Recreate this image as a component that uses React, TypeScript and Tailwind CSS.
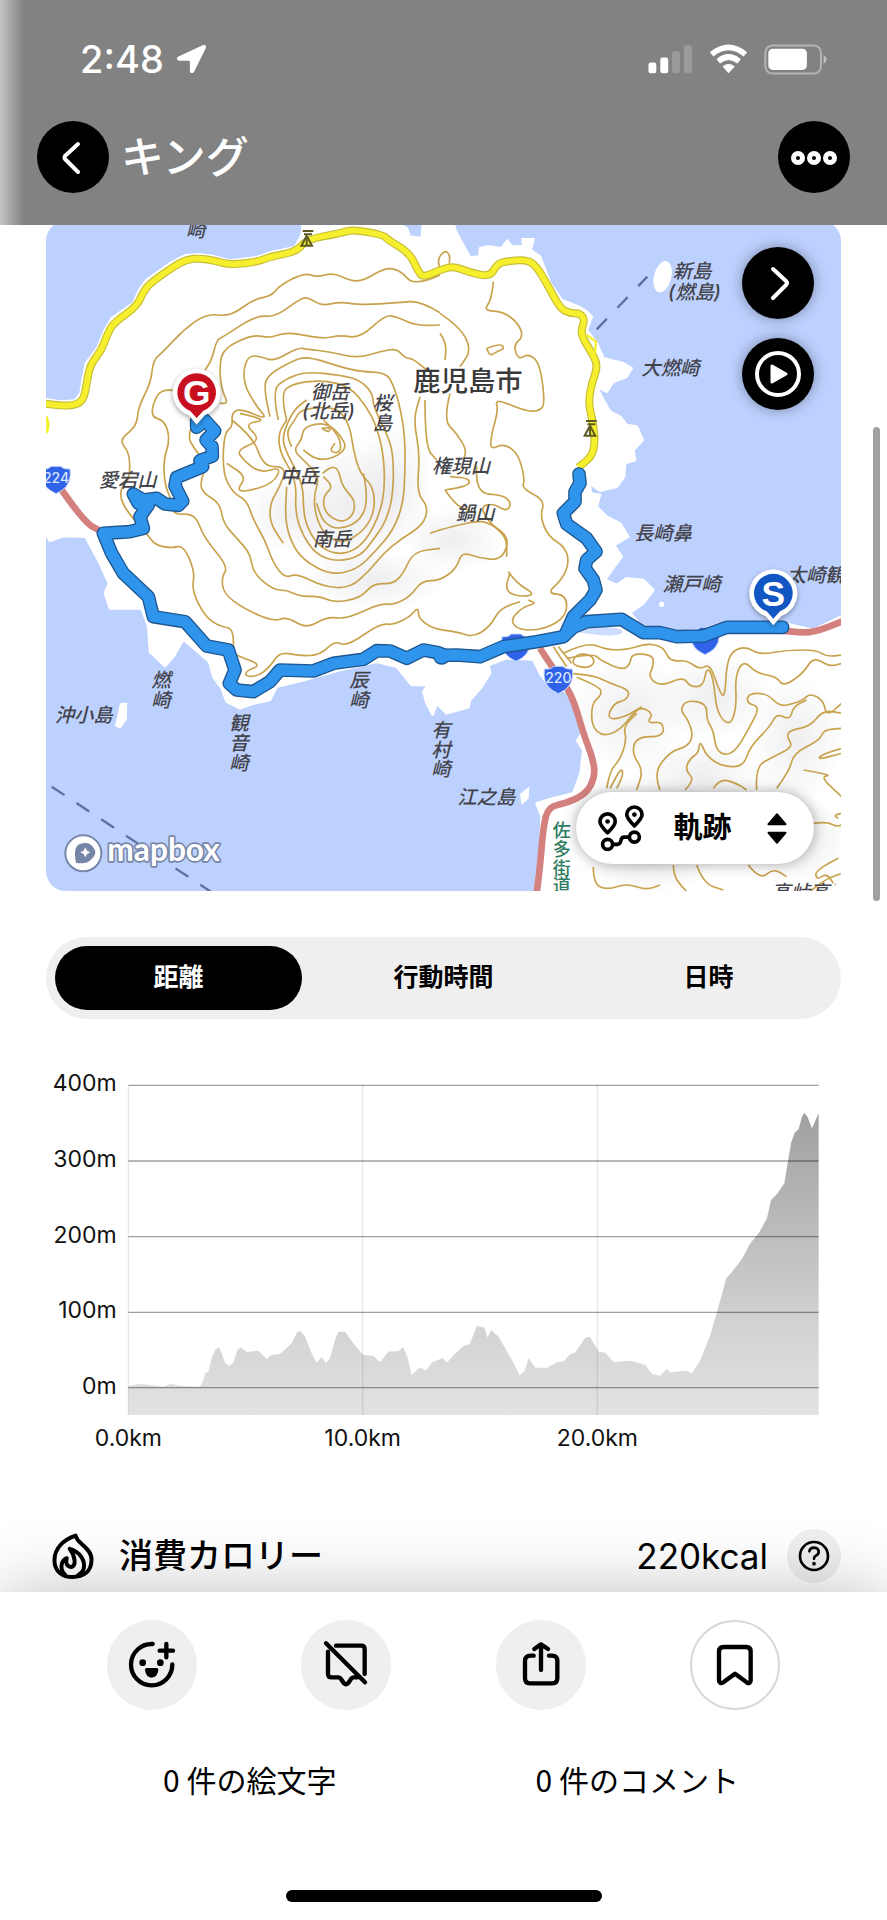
import { useState } from "react";
import type { ReactNode } from "react";
import { clsx } from "clsx";

const TABS = ["距離", "行動時間", "日時"];

const COAST =
  "18,538 60,545 105,542 122,520 128,480 138,430 172,385 195,330 215,295 280,250 298,210 318,182 390,130 435,106 480,103 525,110 570,122 650,112 690,98 765,82 785,45 790,3 1060,3 1100,25 1110,50 1145,55 1150,3 1240,3 1245,30 1262,62 1290,112 1318,110 1320,85 1345,80 1385,85 1402,62 1415,80 1450,78 1448,58 1480,58 1472,90 1500,110 1515,150 1530,190 1565,240 1620,262 1640,275 1655,290 1640,330 1670,370 1690,415 1750,430 1775,445 1760,470 1720,485 1700,515 1670,500 1690,540 1710,575 1740,590 1760,615 1790,620 1808,660 1780,690 1785,720 1755,730 1752,770 1730,800 1680,812 1650,790 1652,820 1680,825 1670,860 1700,890 1740,910 1765,950 1722,975 1745,1010 1715,1050 1695,1080 1730,1095 1760,1075 1810,1080 1840,1110 1810,1150 1770,1178 1800,1215 1850,1230 1930,1235 1990,1228 2050,1208 2240,1212 2320,1230 2403,1190 2403,2013 1485,2013 1500,1900 1505,1790 1490,1750 1530,1738 1600,1720 1622,1660 1630,1590 1612,1562 1625,1540 1600,1440 1580,1415 1530,1400 1500,1360 1480,1318 1400,1315 1345,1335 1350,1360 1325,1400 1290,1440 1285,1462 1220,1480 1190,1450 1178,1484 1160,1450 1150,1415 1165,1395 1115,1395 1070,1340 1010,1325 900,1350 800,1378 710,1400 690,1440 635,1452 600,1465 560,1445 545,1405 520,1370 508,1325 430,1258 400,1310 375,1338 330,1295 325,1220 305,1165 210,1165 195,1120 207,1090 180,1030 145,965 138,950 70,948 30,962 18,945";

const YELLOW_ROAD =
  "8,550 60,558 110,555 132,535 140,490 150,435 185,390 205,335 225,305 290,260 310,215 330,190 400,140 440,118 480,115 525,122 570,135 655,125 690,110 770,95 800,58 900,40 940,28 1030,45 1045,60 1110,100 1135,155 1150,172 1200,150 1240,138 1290,158 1350,170 1370,135 1390,125 1460,118 1490,140 1520,190 1560,265 1590,280 1620,280 1635,300 1620,340 1650,390 1675,435 1655,490 1645,550 1660,610 1665,670 1655,710 1615,742";

const RED_ROADS = [
  "55,795 130,905 185,935",
  "1500,1285 1535,1340 1595,1420 1630,1540 1660,1620 1665,1670 1640,1720 1580,1750 1525,1760 1510,1820 1500,1940 1490,2020",
  "2220,1232 2260,1236 2320,1238 2410,1203",
];

const ROUTE = [
  "470,600 470,622 494,600 524,633 498,660 516,680 517,708 480,722 488,740 410,772 405,798 428,843 415,856 375,852 350,835 310,840 280,822 295,850 325,855 300,890 310,925 270,935 190,940 215,1000 250,1060 325,1130 340,1190 435,1205 500,1278 565,1290 585,1350 568,1390 590,1410 640,1415 690,1385 720,1350 820,1353 880,1330 970,1318 1010,1292 1050,1293 1100,1315 1150,1290 1195,1298 1210,1306 1250,1305 1320,1310 1390,1280 1490,1265 1570,1250 1600,1222 1640,1205 1745,1198 1810,1238 1860,1238 1910,1250 1990,1248 2060,1222 2228,1222",
  "1575,1245 1600,1190 1650,1140 1668,1110 1660,1080 1635,1045 1640,1020 1668,995 1640,955 1580,912 1570,880 1605,845 1605,815 1620,790 1617,762",
];

const ISLAND_CONTOURS = [
  "1200,165 1125,200 1080,150 1035,143 970,183 930,182 880,158 830,172 795,158 720,195 695,228 640,238 570,290 500,280 430,330 365,400 340,420 332,490 295,560 290,620 236,660 270,700 268,780 250,790 238,830 265,880 320,940 345,975 395,985 430,975 465,1055 455,1110 495,1190 540,1220 580,1225 580,1300 600,1310 665,1335 615,1355 620,1370 655,1368 690,1340 720,1295 780,1308 840,1305 885,1262 920,1280 1020,1210 1060,1215 1110,1190 1135,1160 1135,1195 1180,1227 1250,1235 1300,1252 1350,1220 1380,1165 1440,1145",
  "1200,278 1140,242 1080,248 960,255 900,245 845,258 810,235 785,232 705,292 650,285 550,350 530,360 515,420 495,450",
  "420,515 385,507 350,520 330,590 375,602 390,660 370,720 375,800 400,850 400,885 465,880 490,950 565,1040 545,1070 550,1120 610,1165 700,1205 740,1190 800,1227 860,1190 920,1197 1020,1150 1060,1155 1110,1130 1145,1082 1200,1082 1250,1045 1265,995 1320,1015 1380,1020 1405,975 1395,940 1340,905 1300,905 1215,925 1170,940",
  "1200,315 1135,320 1070,290 1035,285 960,355 900,345 850,357 740,335 690,355 640,343 550,385 538,440 545,510 565,550 540,550",
  "465,600 440,645 465,690 500,730 480,790 490,820 540,850 550,910 595,960 630,1000 640,1060 700,1110 740,1110 780,1130 840,1128 880,1148 960,1135 1000,1090 1060,1092 1090,1060 1120,995 1200,985",
  "1160,450 1120,415 1095,415 1070,385 1020,395 950,415 870,395 800,388 775,382 700,425 660,408 625,408 610,450 615,500 650,560 685,600 600,565 575,580 578,620 552,640 548,760 580,820 620,840 640,900 675,960 700,1030 735,1075 770,1060 850,1100 930,1105 990,1050 1030,1000 1085,955 1150,915 1165,860 1130,820 1140,700 1120,600 1140,530",
  "690,590 668,500 690,460 755,425 800,408 900,440 960,455 1040,458 1062,500 1080,560 1095,650 1095,760 1090,850 1060,930 1010,990 950,1050 870,1065 790,1020 755,970 735,900 740,800",
  "715,600 695,510 740,475 800,455 900,465 960,480 998,520 1000,560 1040,640 1060,700 1060,820 1040,900 1000,960 960,1010 890,1025 830,1005 790,950 765,880 770,780 720,700 715,640 740,600",
  "740,600 720,520 760,490 850,480 930,500 980,560 1010,620 1030,700 1035,800 1020,880 980,960 930,1000 870,1000 820,960 790,890 790,790 740,700 725,650 760,570 800,540",
  "600,580 690,600 610,610 665,660 590,690 610,720 660,760 725,740 700,790 620,815 590,810 620,770 560,730",
  "575,600 640,650 670,740 740,740 720,800 690,850 690,910 730,970",
  "755,680 735,640 765,600 780,570 850,560 900,570 930,620 940,690 960,760 1000,800 1005,870 975,930 910,970 860,950 830,900 820,830 840,770 790,720 760,690 785,660 790,625 830,610 870,615 905,650 920,685 880,715 830,720 790,690",
  "850,600 895,640 905,690 885,700 870,690 885,670",
  "845,625 872,620 868,638 845,625",
  "848,760 870,740 895,745 905,795 935,830 945,850 940,885 905,910 855,880 848,830 880,800 850,770",
  "970,760 985,830 965,900 900,930 850,910 830,850",
  "1155,540 1155,680 1190,720",
  "1200,280 1260,320 1295,390 1260,440",
  "1200,340 1220,370 1215,420",
  "1360,185 1355,240 1330,272 1390,275 1435,310 1450,350 1420,375 1435,420 1465,400 1500,430 1515,550 1500,572 1460,575 1365,535 1375,570 1355,640 1350,690 1390,670 1435,700 1455,780 1445,805 1515,840 1500,890 1525,950 1575,980 1588,1030 1565,1080 1520,1120 1580,1125 1580,1190 1510,1230 1435,1230 1410,1200 1450,1160 1490,1150 1465,1140",
  "1405,1055 1430,1090 1490,1125 1430,1130 1395,1110 1410,1058",
  "1340,385 1380,370 1395,385 1370,395 1350,408 1340,385",
  "1230,520 1210,600 1250,640 1280,690 1270,720",
  "1310,740 1305,820 1390,825 1415,850 1400,875 1360,850 1320,860 1350,910 1400,950 1400,1010",
  "1215,810 1285,800 1290,775 1230,770",
  "1215,810 1250,860 1290,870",
  "1200,145 1190,120 1215,90 1230,105 1228,130",
];

// local to the mainland corner, shifted by (1200, 960) when drawn
const MAINLAND_CONTOURS = [
  "370,340 440,305 500,330 560,330 620,310 670,320 690,365 740,360 780,390 810,370 840,460 855,470 860,370 880,330 920,320 960,345 1040,330 1130,330 1160,350 1205,345",
  "380,355 460,340 480,360 545,390 570,375 575,340 640,345 640,380 625,410 660,440 730,410 750,440 790,440 800,380 820,410 830,520 870,560 890,500 885,410 910,360 950,400 1010,410 1030,440 1090,400 1120,350 1170,380 1205,370",
  "390,400 460,405 510,430 570,450 560,480 520,490 500,540 560,530 600,500 640,520 620,550 670,545 670,590 590,590 575,640 610,690 590,750",
  "410,412 480,440 485,465 455,490 455,560 490,590 540,570 580,520 605,500",
  "400,360 410,340 455,345 465,370 440,385 400,375 400,360",
  "340,320 380,380",
  "355,320 395,370",
  "500,745 510,690 540,660 560,600 550,560 590,520",
  "530,745 550,710 545,680 510,745",
  "660,750 640,700 690,635 740,620 760,590 745,540 720,510 740,480 800,490 800,540 820,570 830,640 880,645 930,560 960,500 920,490 925,460 980,460 1020,500 1060,490 1090,480 1110,460 1150,480 1160,530 1205,490",
  "735,750 765,720 735,690 750,655 775,640 780,600 800,650 850,680 910,680 930,620 990,560 1010,520 1050,540 1060,500 1100,480",
  "820,745 840,715 890,730 920,750",
  "950,750 945,680 1000,650 1060,620 1040,590 1050,570 1110,560 1150,510 1205,520",
  "1010,745 1050,690 1060,640 1140,600 1150,570 1205,565",
  "1090,690 1180,705 1140,710 1205,770",
  "1205,625 1150,640 1130,660 1205,640",
  "460,980 460,1030 500,1050 560,1030 620,1050 660,1035",
  "700,975 700,1010 740,1055",
  "770,975 790,1030 850,1050",
  "925,975 960,1020 1000,985 1040,1010",
  "1195,955 1125,990 1130,1020 1160,1000 1180,1030",
  "1120,850 1160,845 1190,860 1205,855",
  "1205,820 1180,825 1195,835",
  "1110,1055 1150,1020 1205,1000",
];

const RELIEF = [
  [930, 860, 170, 210],
  [1060, 800, 120, 190],
  [760, 880, 140, 120],
  [1240, 960, 150, 100],
  [1000, 1080, 220, 90],
  [1770, 1480, 170, 170],
  [2020, 1430, 180, 130],
  [1980, 1670, 200, 110],
  [2270, 1560, 140, 190],
  [1830, 1930, 200, 90],
  [2280, 1860, 150, 130],
];

const PLACES = [
  { text: "崎", x: 438, y: 50 },
  { text: "御岳", x: 812, y: 538 },
  { text: "(北岳)", x: 786, y: 594 },
  { text: "中岳", x: 720, y: 790 },
  { text: "南岳", x: 818, y: 978 },
  { text: "愛宕山", x: 176, y: 800 },
  { text: "権現山", x: 1176, y: 760 },
  { text: "鍋山", x: 1248, y: 900 },
  { text: "新島", x: 1898, y: 175 },
  { text: "(燃島)", x: 1884, y: 238 },
  { text: "大燃崎", x: 1804, y: 465 },
  { text: "長崎鼻", x: 1782, y: 960 },
  { text: "瀬戸崎", x: 1868, y: 1113 },
  { text: "太崎観", x: 2240, y: 1085 },
  { text: "沖小島", x: 44, y: 1507 },
  { text: "江之島", x: 1252, y: 1753 },
  { text: "高峠高原", x: 2194, y: 2036 },
];

const VERTICAL_PLACES = [
  { text: "桜島", x: 998, ys: [570, 630] },
  { text: "燃崎", x: 334, ys: [1402, 1462] },
  { text: "観音崎", x: 568, ys: [1530, 1590, 1650] },
  { text: "辰崎", x: 928, ys: [1400, 1460] },
  { text: "有村崎", x: 1174, ys: [1552, 1610, 1668] },
];

const ELEVATION =
  "385,978 420,972 450,975 490,980 510,972 550,978 600,980 610,960 615,940 625,935 635,895 645,870 657,862 665,880 675,908 688,918 700,908 712,870 722,862 740,876 775,872 800,897 815,885 840,882 875,850 890,820 900,812 915,830 935,880 950,908 965,890 978,910 990,895 1005,840 1015,815 1035,815 1060,850 1090,885 1120,887 1140,907 1165,875 1195,873 1210,862 1222,890 1235,945 1260,922 1278,932 1295,908 1328,894 1341,908 1361,885 1391,857 1409,853 1431,798 1453,803 1463,833 1473,810 1496,830 1541,910 1559,945 1573,935 1586,895 1606,923 1641,923 1671,907 1691,904 1711,882 1726,877 1756,833 1769,830 1796,875 1816,878 1841,907 1891,902 1936,915 1956,942 1981,947 1999,927 2011,937 2061,932 2076,940 2101,900 2131,825 2161,720 2179,655 2196,635 2226,597 2251,550 2276,520 2301,475 2313,420 2331,402 2353,370 2373,250 2384,218 2396,207 2406,170 2413,158 2423,172 2436,205 2456,160 2456,1065 385,1065";

const Y_TICKS = [
  { label: "400m", y: 76 },
  { label: "300m", y: 303 },
  { label: "200m", y: 530 },
  { label: "100m", y: 757 },
  { label: "0m", y: 983 },
];

const X_TICKS = [
  { label: "0.0km", x: 385 },
  { label: "10.0km", x: 1088 },
  { label: "20.0km", x: 1792 },
];

// rounds the corners of a polyline by curving between segment midpoints
function smooth(points: string) {
  const pts = points.split(" ").map((p) => p.split(",").map(Number));
  const last = pts[pts.length - 1];
  let d = `M${pts[0][0]} ${pts[0][1]}`;
  for (let i = 1; i < pts.length - 1; i++) {
    const [x, y] = pts[i];
    const [nx, ny] = pts[i + 1];
    d += `Q${x} ${y} ${(x + nx) / 2} ${(y + ny) / 2}`;
  }
  return `${d}L${last[0]} ${last[1]}`;
}

function StatusBar() {
  return (
    <div className="flex h-[50px] items-center justify-between pr-[60px] pl-20 text-white">
      <div className="flex items-center gap-3">
        <span className="text-[38px] leading-[50px] font-medium">2:48</span>
        <svg viewBox="464 42 94 92" className="h-[30px] w-[31px]" fill="currentColor">
          <path d="M547 45Q557 43 555 54L519 127Q515 133 510 131Q506 129 506 123V96Q506 93 502 93H473Q466 92 466 87Q466 82 471 80Z" />
        </svg>
      </div>
      <div className="flex items-center gap-4">
        <svg viewBox="65 43 134 88" className="h-[29px] w-[45px]" fill="currentColor">
          <rect x="65" y="96" width="24" height="33" rx="7" />
          <rect x="101" y="81" width="24" height="48" rx="7" />
          <rect x="137" y="62" width="24" height="67" rx="7" opacity=".2" />
          <rect x="173" y="44" width="24" height="85" rx="7" opacity=".2" />
        </svg>
        <svg viewBox="246 42 118 90" className="h-[30px] w-[39px]">
          <path d="M254 73Q305 31 356 73M274 94Q305 68 337 94" fill="none" stroke="currentColor" strokeWidth="17" />
          <path d="M287 110Q305 95 324 110L305 130Z" fill="currentColor" />
        </svg>
        <svg viewBox="413 41 188 92" className="h-[31px] w-[63px]">
          <rect x="417" y="45" width="166" height="84" rx="22" fill="none" stroke="#fff" strokeOpacity=".4" strokeWidth="6" />
          <rect x="426" y="55" width="115" height="63" rx="13" fill="#fff" />
          <path d="M591 73Q600 80 600 87T591 99Z" fill="#fff" fillOpacity=".5" />
        </svg>
      </div>
    </div>
  );
}

function RoundButton({ label, className, children }: { label: string; className?: string; children: ReactNode }) {
  return (
    <button aria-label={label} className={clsx("flex size-[72px] shrink-0 items-center justify-center rounded-full bg-black text-white", className)}>
      {children}
    </button>
  );
}

function Shield({ x, y, text }: { x: number; y: number; text?: string }) {
  return (
    <g>
      <path
        d={`M${x - 42} ${y - 28}Q${x - 22} ${y - 26} ${x - 14} ${y - 36}H${x + 14}Q${x + 22} ${y - 26} ${x + 42} ${y - 28}Q${x + 48} ${y + 16} ${x + 18} ${y + 36}L${x} ${y + 46}L${x - 18} ${y + 36}Q${x - 48} ${y + 16} ${x - 42} ${y - 28}Z`}
        fill="#3163e8"
        stroke="#c9d8ff"
        strokeWidth="3"
      />
      {text && (
        <text x={x} y={y + 14} textAnchor="middle" fontSize="42" fontWeight="500" fill="#dbe6ff">{text}</text>
      )}
    </g>
  );
}

function Pin({ x, y, letter, color }: { x: number; y: number; letter: string; color: string }) {
  return (
    <g>
      <path
        d={`M${x} ${y + 96}L${x - 24} ${y + 68}A72 72 0 1 1 ${x + 24} ${y + 68}Z`}
        fill="#fff"
        className="drop-shadow-[0_6px_8px_rgba(0,0,0,0.35)]"
      />
      <path d={`M${x} ${y + 76}L${x - 20} ${y + 54}A58 58 0 1 1 ${x + 20} ${y + 54}Z`} fill={color} />
      <text x={x} y={y + 37} textAnchor="middle" fontSize="106" fontWeight="700" fill="#fff" fontFamily="Liberation Sans, sans-serif">{letter}</text>
    </g>
  );
}

function TowerMark({ x, y }: { x: number; y: number }) {
  return (
    <g fill="none" stroke="#5c5a20" strokeWidth="6">
      <path d={`M${x - 12} ${y - 22}H${x + 20}M${x - 8} ${y - 12}H${x + 16}`} />
      <path d={`M${x} ${y - 8}L${x - 16} ${y + 22}H${x + 16}Z`} />
      <path d={`M${x} ${y}V${y + 22}`} />
    </g>
  );
}

function RouteMap() {
  return (
    <svg viewBox="18 3 2385 2010" className="block w-full bg-[#bdd1ff]" role="img" aria-label="桜島の軌跡マップ">
      <defs>
        <radialGradient id="relief">
          <stop offset="0" stopColor="#8d8699" stopOpacity=".15" />
          <stop offset="1" stopColor="#8d8699" stopOpacity="0" />
        </radialGradient>
      </defs>
      <polygon points={COAST} fill="#fff" stroke="#fff" strokeWidth="8" strokeLinejoin="round" />
      <path d="M1610 1236Q1640 1218 1700 1222T1745 1240Q1720 1254 1610 1236Z" fill="#cddcff" />
      <g fill="#fff">
        <ellipse cx="1868" cy="170" rx="26" ry="48" transform="rotate(14 1868 170)" />
        <path d="M240 1450L262 1448L260 1500L240 1526L225 1518Z" />
        <path d="M1440 1722L1468 1700L1466 1735L1445 1755Z" />
        <circle cx="1865" cy="1153" r="8" />
      </g>
      <g fill="url(#relief)">
        {RELIEF.map(([cx, cy, rx, ry]) => (
          <ellipse key={`${cx}-${cy}`} cx={cx} cy={cy} rx={rx} ry={ry} />
        ))}
      </g>

      {/* Contours */}
      <g fill="none" stroke="#c8a24c" strokeWidth="5" strokeLinejoin="round">
        {ISLAND_CONTOURS.map((points) => <path key={points} d={smooth(points)} />)}
        <g transform="translate(1200 960)">
          {MAINLAND_CONTOURS.map((points) => <path key={points} d={smooth(points)} />)}
        </g>
      </g>

      {/* Ferry lines */}
      <g stroke="#5f6f9e" strokeWidth="7" fill="none">
        <path d="M1670 328L1822 170" strokeDasharray="44 46" />
        <path d="M35 1700L520 2020" strokeDasharray="46 43" />
      </g>

      {/* Roads */}
      <g fill="none" strokeLinejoin="round">
        {RED_ROADS.map((points) => <path key={points} d={smooth(points)} stroke="#d4807f" strokeWidth="20" />)}
        <path d={smooth(YELLOW_ROAD)} stroke="#c8bd35" strokeWidth="24" />
        <path d={smooth(YELLOW_ROAD)} stroke="#f5ef2e" strokeWidth="17" />
        <path d="M1640 345L1668 365L1665 400" stroke="#f5ef2e" strokeWidth="7" />
        <path d="M18 590Q30 615 18 638" stroke="#f5ef2e" strokeWidth="10" />
      </g>
      <TowerMark x={800} y={55} />
      <TowerMark x={1650} y={625} />
      <Shield x={48} y={775} text="224" />
      <Shield x={1428} y={1278} />
      <Shield x={1995} y={1258} />
      <Shield x={1555} y={1375} text="220" />

      {/* Place names */}
      <g fontSize="58" fontStyle="italic" fontWeight="500" fill="#44444c">
        {PLACES.map((p) => <text key={p.text} x={p.x} y={p.y}>{p.text}</text>)}
        {VERTICAL_PLACES.map((p) => (
          <text key={p.text}>
            {p.ys.map((y, i) => <tspan key={y} x={p.x} y={y}>{p.text[i]}</tspan>)}
          </text>
        ))}
      </g>
      <text x="1120" y="512" fontSize="82" fontWeight="500" fill="#3a3a3a">鹿児島市</text>
      <text fontSize="54" fontWeight="500" fill="#2f7d62">
        {[1852, 1908, 1964, 2016].map((y, i) => <tspan key={y} x="1538" y={y}>{"佐多街道"[i]}</tspan>)}
      </text>

      {/* Track */}
      <g fill="none" strokeLinejoin="round" strokeLinecap="round">
        {ROUTE.map((points) => <polyline key={points} points={points} stroke="#1d5690" strokeWidth="41" />)}
        <circle cx="1205" cy="1308" r="26" fill="#1d5690" />
        {ROUTE.map((points) => <polyline key={points} points={points} stroke="#2f95ec" strokeWidth="33" />)}
        <circle cx="1205" cy="1308" r="22" fill="#2f95ec" />
      </g>
      <Pin x={470} y={518} letter="G" color="#c70f1f" />
      <Pin x={2200} y={1120} letter="S" color="#1256c4" />

      {/* Attribution */}
      <circle cx="130" cy="1900" r="54" fill="#fff" stroke="#7786a8" strokeWidth="6" />
      <path d="M108 1928Q98 1880 120 1872Q145 1862 160 1882T152 1920Q138 1934 108 1928Z" fill="#7786a8" />
      <path d="M136 1882L141 1892L151 1897L141 1902L136 1912L131 1902L121 1897L131 1892Z" fill="#fff" />
      <text x="202" y="1924" fontSize="95" fontWeight="700" fontFamily="Lato, sans-serif" fill="#fff" stroke="#7786a8" strokeWidth="10" strokeLinejoin="round" paintOrder="stroke">mapbox</text>
    </svg>
  );
}

function ElevationChart() {
  return (
    <svg viewBox="138 0 2385 1200" className="mt-[41px] block w-full" role="img" aria-label="標高グラフ">
      <defs>
        <linearGradient id="area" gradientUnits="userSpaceOnUse" x1="0" y1="158" x2="0" y2="1065">
          <stop offset="0" stopColor="#a0a0a0" />
          <stop offset="0.7" stopColor="#d2d2d2" />
          <stop offset="1" stopColor="#e2e2e2" />
        </linearGradient>
      </defs>
      <polygon points={ELEVATION} fill="url(#area)" />
      <g stroke="#000" strokeOpacity=".09" strokeWidth="4">
        {X_TICKS.map((t) => <line key={t.label} x1={t.x} x2={t.x} y1="76" y2="1065" />)}
      </g>
      <g stroke="#000" strokeOpacity=".38" strokeWidth="4">
        {Y_TICKS.map((t) => <line key={t.label} x1="385" x2="2456" y1={t.y} y2={t.y} />)}
      </g>
      <g fontSize="69" fill="#111">
        {Y_TICKS.map((t) => <text key={t.label} x="350" y={t.y + 18} textAnchor="end">{t.label}</text>)}
        {X_TICKS.map((t) => <text key={t.label} x={t.x} y="1157" textAnchor="middle">{t.label}</text>)}
      </g>
    </svg>
  );
}

function ActionButton({ label, outlined, viewBox, children }: { label: string; outlined?: boolean; viewBox: string; children: ReactNode }) {
  return (
    <button
      aria-label={label}
      className={clsx("flex size-[90px] items-center justify-center rounded-full", outlined ? "border-2 border-[#d8d8d8] bg-white" : "bg-[#efefef]")}
    >
      <svg viewBox={viewBox} className="size-[50px] shrink-0" fill="none" stroke="#000" strokeWidth="13" strokeLinecap="round" strokeLinejoin="round">
        {children}
      </svg>
    </button>
  );
}

export default function App() {
  const [tab, setTab] = useState(TABS[0]);

  return (
    <div className="relative flex min-h-screen flex-col bg-white font-['Inter','Noto_Sans_CJK_JP',sans-serif] text-black" lang="ja">
      <header className="relative z-10 bg-[linear-gradient(to_right,#c4c4c4,#828282_24px)] pt-[34px] pb-8">
        <StatusBar />
        <div className="mt-[37px] flex items-center justify-between px-[37px]">
          <div className="flex items-center gap-3">
            <RoundButton label="戻る">
              <svg viewBox="0 0 72 72" className="size-[72px]" fill="none" stroke="currentColor" strokeWidth="4" strokeLinecap="round" strokeLinejoin="round">
                <path d="M41 23L28 35Q27 37 28 38L41 51" />
              </svg>
            </RoundButton>
            <h1 className="text-[43px] leading-[60px] font-medium text-white">キング</h1>
          </div>
          <RoundButton label="メニュー">
            <svg viewBox="0 0 72 72" className="size-[72px]" fill="none" stroke="currentColor" strokeWidth="5">
              <circle cx="20" cy="37" r="4.5" />
              <circle cx="36" cy="37" r="4.5" />
              <circle cx="52" cy="37" r="4.5" />
            </svg>
          </RoundButton>
        </div>
      </header>

      <main className="-mt-1 px-[46px] pb-[9px]">
        {/* Map */}
        <section className="relative overflow-hidden rounded-[20px]">
          <RouteMap />
          <div className="absolute top-[26px] right-[27px] flex flex-col gap-[19px]">
            <RoundButton label="次へ" className="shadow-[0_0_14px_rgba(0,0,0,0.35)]">
              <svg viewBox="0 0 72 72" className="size-[72px]" fill="none" stroke="currentColor" strokeWidth="4" strokeLinecap="round" strokeLinejoin="round">
                <path d="M31 22L44 34Q46 36 44 38L31 51" />
              </svg>
            </RoundButton>
            <RoundButton label="再生" className="shadow-[0_0_14px_rgba(0,0,0,0.35)]">
              <svg viewBox="0 0 72 72" className="size-[72px]">
                <circle cx="36" cy="36" r="21" fill="none" stroke="currentColor" strokeWidth="4" />
                <path d="M30 28V44L44 36Z" fill="currentColor" stroke="currentColor" strokeWidth="3" strokeLinejoin="round" />
              </svg>
            </RoundButton>
          </div>
          <label className="absolute right-[27px] bottom-[27px] flex h-[72px] w-[238px] items-center justify-between rounded-full bg-white pr-[26px] pl-[21px] shadow-[0_0_14px_rgba(0,0,0,0.35)]">
            <svg viewBox="470 790 145 145" className="size-12" fill="none" stroke="#000" strokeWidth="11" strokeLinejoin="round">
              <path d="M502 877C490 865 479 855 479 843A23 23 0 0 1 525 843C525 855 514 865 502 877Z" />
              <path d="M583 856C571 844 560 834 560 822A23 23 0 0 1 606 822C606 834 595 844 583 856Z" />
              <circle cx="502" cy="912" r="15" />
              <circle cx="583" cy="890" r="15" />
              <path d="M517 912H532Q540 912 542 901T552 890H568" />
              <circle cx="502" cy="843" r="7" fill="#000" stroke="none" />
              <circle cx="583" cy="822" r="7" fill="#000" stroke="none" />
            </svg>
            <select aria-label="表示切替" className="w-16 appearance-none bg-transparent text-[29px] leading-[40px] font-bold outline-none">
              <option>軌跡</option>
            </select>
            <svg viewBox="980 815 66 98" className="pointer-events-none h-[33px] w-[22px]">
              <path d="M1013 822L1038 851H988ZM1013 906L1038 877H988Z" fill="#000" stroke="#000" strokeWidth="7" strokeLinejoin="round" />
            </svg>
          </label>
        </section>

        {/* Axis switch */}
        <div role="tablist" className="mt-[46px] grid grid-cols-3 rounded-full bg-[#efefef]">
          {TABS.map((t) => (
            <button
              key={t}
              role="tab"
              aria-selected={t === tab}
              onClick={() => setTab(t)}
              className={clsx("m-[9px] h-16 rounded-full text-[25px] font-bold", t === tab && "bg-black text-white")}
            >
              {t}
            </button>
          ))}
        </div>

        <ElevationChart />

        {/* Calories */}
        <div className="mt-[69px] flex h-[54px] items-center">
          <svg viewBox="150 65 135 145" className="ml-1 h-12 w-[45px]" fill="none" stroke="#000" strokeWidth="12" strokeLinecap="round" strokeLinejoin="round">
            <path d="M227 76C190 88 163 115 163 150C163 185 188 201 218 201C250 201 275 185 275 148C275 125 256 110 244 100C234 92 229 84 227 76Z" />
            <path d="M209 116C238 124 258 150 251 177C248 187 242 192 234 196M209 116C226 138 230 168 213 171C201 170 196 160 200 144C182 152 178 178 195 194" />
          </svg>
          <h2 className="ml-6 text-[34px] leading-[54px] font-medium">消費カロリー</h2>
          <span className="ml-auto text-[35px] leading-[54px]">220kcal</span>
          <button aria-label="消費カロリーについて" className="ml-[19px] flex size-[54px] items-center justify-center rounded-full bg-[#efefef]">
            <svg viewBox="1083 90 96 96" className="size-8" fill="none" stroke="#000" strokeWidth="8" strokeLinecap="round" strokeLinejoin="round">
              <circle cx="1131" cy="138" r="42" />
              <path d="M1117 124Q1119 113 1131 113Q1145 114 1145 126Q1145 133 1137 137Q1131 140 1131 146" />
              <circle cx="1131" cy="161" r="3" fill="#000" strokeWidth="5" />
            </svg>
          </button>
        </div>
      </main>

      <footer className="relative bg-white shadow-[0_0_64px_rgba(0,0,0,0.25)]">
        <div className="flex justify-between px-[107px] pt-7">
          <ActionButton label="絵文字を追加" viewBox="381 390 150 150">
            <path d="M458 402A62 62 0 1 0 517 463M499 402V442M479 422H519" />
            <g fill="#000" stroke="none">
              <circle cx="428" cy="458" r="10" />
              <circle cx="481" cy="458" r="10" />
              <path d="M439 474H471Q476 475 475 481Q472 503 455 503T435 481Q434 475 439 474Z" />
            </g>
          </ActionButton>
          <ActionButton label="コメント不可" viewBox="963 390 150 150">
            <path d="M1008 407H1084Q1094 407 1094 418V492M984 425V491Q984 502 995 502H1014Q1021 502 1025 510L1031 519Q1038 526 1045 519L1051 510Q1055 502 1062 502H1072M978 400L1095 517" />
          </ActionButton>
          <ActionButton label="共有" viewBox="235 390 150 150">
            <path d="M288 437H279Q262 437 262 453V505Q262 520 277 520H344Q359 520 359 505V453Q359 437 343 437H334M310 480V405M290 417L310 403L331 417" />
          </ActionButton>
          <ActionButton label="保存" outlined viewBox="820 390 150 150">
            <path d="M847 425Q847 411 861 411H929Q942 411 942 425V512Q941 524 930 517L895 491L860 517Q848 524 847 512Z" />
          </ActionButton>
        </div>
        <div className="mt-[49px] grid grid-cols-2 px-14 text-center text-[30px] leading-10">
          <a href="#reactions" className="font-['Noto_Sans_CJK_JP',sans-serif]">0 件の絵文字</a>
          <a href="#comments" className="font-['Noto_Sans_CJK_JP',sans-serif]">0 件のコメント</a>
        </div>
        <div className="mx-auto mt-[91px] mb-[18px] h-3 w-[316px] rounded-full bg-black" />
      </footer>

      {/* Scroll indicator */}
      <div className="absolute top-[427px] right-[7px] h-[474px] w-[7px] rounded-full bg-[#a0a0a0]" />
    </div>
  );
}
